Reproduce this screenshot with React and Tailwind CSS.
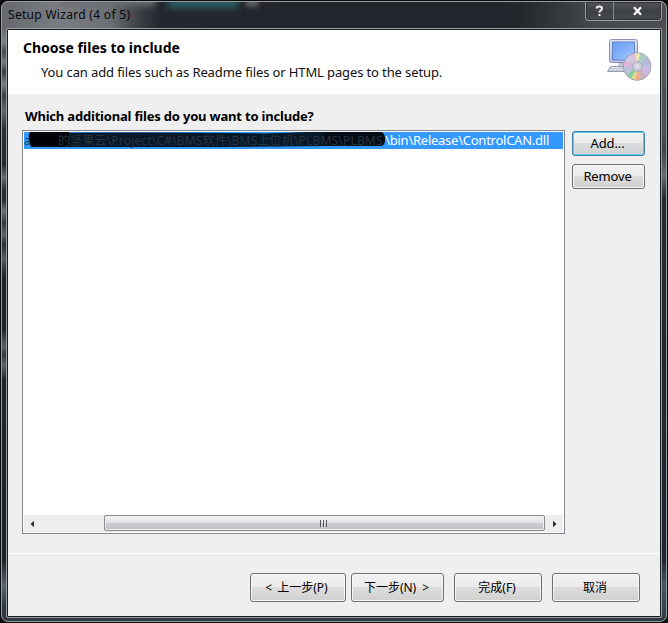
import React from 'react';

const latin = "font-['Noto_Sans','Noto_Sans_CJK_SC',sans-serif]";

function PushButton({ children, className = '', focused = false }) {
  return (
    <button
      className={`flex shrink-0 items-center justify-center whitespace-nowrap rounded-[3px] border text-black ${
        focused
          ? 'border-[#3c7fa1] bg-[linear-gradient(#f1f3f4_0%,#e9ebec_48%,#dadcdd_50%,#cfd1d2_100%)] shadow-[inset_0_0_0_1px_#5ccdf0]'
          : 'border-[#707070] bg-[linear-gradient(#f2f2f2_0%,#ebebeb_48%,#dddddd_50%,#cfcfcf_100%)] shadow-[inset_0_0_0_1px_#f6f6f6]'
      } ${className}`}
    >
      {children}
    </button>
  );
}

function SetupIcon() {
  return (
    <svg width="48" height="46" viewBox="0 0 48 46" className="block">
      <defs>
        <linearGradient id="screen" x1="0" y1="0" x2="1" y2="1">
          <stop offset="0" stopColor="#6d9cf0" />
          <stop offset="0.5" stopColor="#83b0fa" />
          <stop offset="1" stopColor="#a9cdff" />
        </linearGradient>
        <linearGradient id="case" x1="0" y1="0" x2="0" y2="1">
          <stop offset="0" stopColor="#dfe4f4" />
          <stop offset="1" stopColor="#bcc4dc" />
        </linearGradient>
      </defs>
      <path d="M14 24h13v5h4v4H10v-4h4z" fill="#c3c8dc" stroke="#9197b5" strokeWidth="0.7" />
      <rect x="4.5" y="1.5" width="28" height="23" rx="2" fill="url(#case)" stroke="#8b95bb" />
      <rect x="7.5" y="4" width="22" height="18" fill="url(#screen)" stroke="#5577c8" strokeWidth="0.8" />
      <path d="M5.500 28.500h20v5h-23z" fill="#e9ebf4" stroke="#8d93ad" strokeWidth="0.9" />
      <path d="M5 30.300h18M4 32.200h18" stroke="#8c91a6" strokeDasharray="1.300 1" strokeWidth="0.9" />
      <g transform="translate(32.200 28.500)">
        <circle r="13.800" fill="#c9cbd8" stroke="#92929e" strokeWidth="0.9" />
        <path d="M0 0L-11.500 -6.600A13.300 13.300 0 0 1 -7 -11.300Z" fill="#cfcbe0" />
        <path d="M0 0L-7 -11.300A13.300 13.300 0 0 1 -2 -13.100Z" fill="#dfbfdf" />
        <path d="M0 0L-2 -13.100A13.300 13.300 0 0 1 3 -12.900Z" fill="#eee7b5" />
        <path d="M0 0L3 -12.900A13.300 13.300 0 0 1 9 -9.800Z" fill="#a9cfc0" />
        <path d="M0 0L9 -9.800A13.300 13.300 0 0 1 13.300 0Z" fill="#b6bddb" />
        <path d="M0 0H13.300A13.300 13.300 0 0 1 9.800 9Z" fill="#cdb8e4" />
        <path d="M0 0L9.800 9A13.300 13.300 0 0 1 3.500 12.800Z" fill="#c9b3b9" />
        <path d="M0 0L3.500 12.800A13.300 13.300 0 0 1 -1.500 13.200Z" fill="#f0ac88" />
        <path d="M0 0L-1.500 13.200A13.300 13.300 0 0 1 -6 11.800Z" fill="#dfd78c" />
        <path d="M0 0L-6 11.800A13.300 13.300 0 0 1 -10.500 8.200Z" fill="#85cf9c" />
        <path d="M0 0L-10.500 8.200A13.300 13.300 0 0 1 -13.300 0Z" fill="#bcc2dc" />
        <path d="M0 0H-13.300A13.300 13.300 0 0 1 -11.500 -6.600Z" fill="#e1b3d8" />
        <circle r="4.800" fill="#d5d6e2" stroke="#a0a1b3" strokeWidth="0.8" />
        <circle r="3" fill="#f2f3f8" stroke="#a5a6b6" strokeWidth="0.7" />
        <circle r="1.300" fill="#ffffff" stroke="#999bad" strokeWidth="0.6" />
      </g>
    </svg>
  );
}

function TitleBar() {
  return (
    <div className="flex h-[27px] shrink-0 items-start justify-between pl-[6px] pr-[4px]">
      <span className="mt-[5px] whitespace-nowrap text-[12px] leading-[16px] tracking-[0.3px] text-[#08090a]">
        Setup Wizard (4 of 5)
      </span>
      <div className="flex h-[19px] w-[77px] overflow-hidden rounded-b-[4px] border border-t-0 border-[#9a9ea2] bg-[linear-gradient(#51555a,#3e4246_50%,#46494d)] shadow-[inset_0_0_0_1px_#303337]">
        <div className="flex w-[28px] items-center justify-center border-r border-[#85888c]">
          <svg width="9" height="12" viewBox="0 0 9 12">
            <path d="M1.600 3.600Q1.600 1.400 4.300 1.400Q7 1.400 7 3.500Q7 4.900 5.500 5.600Q4.500 6.200 4.500 7.600M4.500 8.900V11" fill="none" stroke="#f4f4f4" strokeWidth="2" />
          </svg>
        </div>
        <div className="flex grow items-center justify-center">
          <svg width="11" height="10" viewBox="0 0 11 10">
            <path d="M2 1.200L9 8.800M9 1.200L2 8.800" stroke="#f4f4f4" strokeWidth="2.400" />
          </svg>
        </div>
      </div>
    </div>
  );
}

function FileList() {
  return (
    <div className="flex h-[404px] w-[543px] shrink-0 flex-col border border-[#828790] bg-white p-px">
      <div className="relative flex h-[17px] shrink-0 justify-end overflow-hidden bg-[#3399ff] pr-[14px]">
        <span className="whitespace-nowrap text-[13px] leading-[17px] tracking-[-0.25px] text-white">\bin\Release\ControlCAN.dll</span>
        <svg className="absolute left-0 top-0" width="363" height="17" viewBox="0 0 363 17">
          <path d="M5 1Q150 0 240 1.500Q290 0 310 -1H356Q361 1 361 7Q361 14 357 14H300L200 15H7Q4 8 5 1Z" fill="#061829" />
          <path d="M6 0H45V14H8Q5 8 6 0Z" fill="#000104" />
          <path d="M300 0H356Q361 2 361 7Q361 13 356 13H300Z" fill="#020b15" />
        </svg>
        <span className="absolute left-[34px] top-0 whitespace-nowrap text-[12px] leading-[18px] tracking-[0.18px] text-[#29333d]">
          的坚果云\Project\C#\BMS软件\BMS上位机\PLBMS\PLBMS
        </span>
        <span className="absolute left-0 top-0 text-[12px] leading-[17px] text-[#163f6a]">a</span>
      </div>
      <div className="grow" />
      <div className="flex h-[17px] shrink-0 items-stretch bg-[#ededed]">
        <div className="flex w-[80px] items-center pl-[6px]">
          <svg width="5" height="8" viewBox="0 0 5 8"><path d="M4 .8v6.400L.5 4z" fill="#303030" /></svg>
        </div>
        <div className="mb-[1px] flex w-[441px] items-center justify-center gap-[2px] rounded-[2px] border border-[#8d8d90] bg-[linear-gradient(#f3f3f4_0%,#e4e4e6_45%,#cdcdd0_52%,#bfbfc3_100%)] pr-[2px] shadow-[inset_0_0_0_1px_#eeeeef]">
          <i className="h-[7px] w-px bg-[#55565a]" />
          <i className="h-[7px] w-px bg-[#55565a]" />
          <i className="h-[7px] w-px bg-[#55565a]" />
        </div>
        <div className="flex grow items-center pl-[7px]">
          <svg width="5" height="8" viewBox="0 0 5 8"><path d="M1 .8v6.400L4.500 4z" fill="#303030" /></svg>
        </div>
      </div>
    </div>
  );
}

function Desktop() {
  return (
    <div className="absolute inset-0 overflow-hidden bg-[linear-gradient(90deg,#65686c_0px,#7a7d81_60px,#6c6f73_110px,#3b3e43_140px,#24282e_160px,#22262c_480px,#24282d_520px,#474b4f_600px,#4b4f53_668px)]">
      <div className="absolute left-[168px] top-[-4px] h-[12px] w-[70px] bg-[#285d60] blur-[3px]" />
      <div className="absolute left-[60px] top-[-5px] h-[11px] w-[95px] bg-[#696c74] blur-[3px]" />
      <div className="absolute left-[246px] top-[-1px] h-[8px] w-[12px] bg-[#5c5e61] blur-[2px]" />
      <div className="absolute bottom-0 left-0 top-[30px] w-[8px] bg-[linear-gradient(#6a6d72_0,#7d8084_12px,#45484d_22px,#777a7f_32px,#3a3d42_42px,#7a7d82_54px,#3a3d42_66px,#64676d_80px,#2c2e33_100px,#26292d_135px,#666b74_147px,#2a2d31_160px,#26292d_170px,#6b7079_181px,#35383c_193px,#5d626b_204px,#2a2d31_215px,#575c65_228px,#222528_245px,#222528_300px,#5c616a_316px,#36393e_325px,#5c616a_335px,#222528_350px,#1d2023_530px,#586473_556px,#36404d_572px,#29333f_590px)]" />
      <div className="absolute bottom-0 right-0 top-[30px] w-[8px] bg-[linear-gradient(#4e5256_0,#4a4e52_105px,#3f4347_120px,#686c72_145px,#252a31_168px,#20252d_530px,#4a5665_555px,#303943_590px)]" />
      <div className="absolute bottom-0 left-0 h-[8px] w-full bg-[#303841]" />
    </div>
  );
}

export default function App() {
  return (
    <div className={`relative h-[623px] w-[668px] overflow-hidden bg-[#15181c] ${latin}`}>
      <Desktop />
      <div className="relative m-[1px] flex h-[621px] w-[666px] flex-col rounded-[7px] border border-[#999ca0] px-[5px] pt-0 shadow-[0_0_0_4px_#090b0e]">
        <div className="-mx-[5px]"><TitleBar /></div>
        <main className="flex h-[588px] w-[654px] flex-col rounded-[1px] border border-[#181b20] bg-[#efefef] shadow-[0_0_0_1px_#9b9ea3]">
          <header className="flex h-[64px] shrink-0 justify-between bg-white pl-[15px] pr-[7px]">
            <div className="flex flex-col">
              <h1 className="mt-[8px] whitespace-nowrap text-[14px] font-bold leading-[20px] text-black">Choose files to include</h1>
              <p className="ml-[18px] mt-[5px] whitespace-nowrap text-[13px] leading-[18px] tracking-[-0.12px] text-[#111111]">
                You can add files such as Readme files or HTML pages to the setup.
              </p>
            </div>
            <div className="mt-[8px]"><SetupIcon /></div>
          </header>
          <section className="flex h-[460px] shrink-0 flex-col border-b border-white pl-[14px]">
            <h2 className="ml-[3px] mt-[13px] whitespace-nowrap text-[13px] font-bold leading-[18px] tracking-[-0.19px] text-black">
              Which additional files do you want to include?
            </h2>
            <div className="mt-[5px] flex gap-[7px]">
              <FileList />
              <div className="mt-px flex flex-col gap-[8px]">
                <PushButton focused className="h-[25px] w-[73px] pr-[2px] text-[13px] tracking-[-0.1px]">Add...</PushButton>
                <PushButton className="h-[25px] w-[73px] pr-[2px] text-[13px] tracking-[-0.15px]">Remove</PushButton>
              </div>
            </div>
          </section>
          <footer className="flex pl-[242px] pt-[19px] text-[12px]">
            <PushButton className="h-[29px] w-[96px] pr-[3px]"><span className="mr-[5px]">&lt;</span> <span>上一步(P)</span></PushButton>
            <PushButton className="ml-[5px] h-[29px] w-[93px] pr-[2px]"><span className="mr-[6px]">下一步(N)</span> <span>&gt;</span></PushButton>
            <PushButton className="ml-[10px] h-[29px] w-[88px] pr-[2px]">完成(F)</PushButton>
            <PushButton className="ml-[10px] h-[29px] w-[88px] pr-[2px]">取消</PushButton>
          </footer>
        </main>
      </div>
    </div>
  );
}
